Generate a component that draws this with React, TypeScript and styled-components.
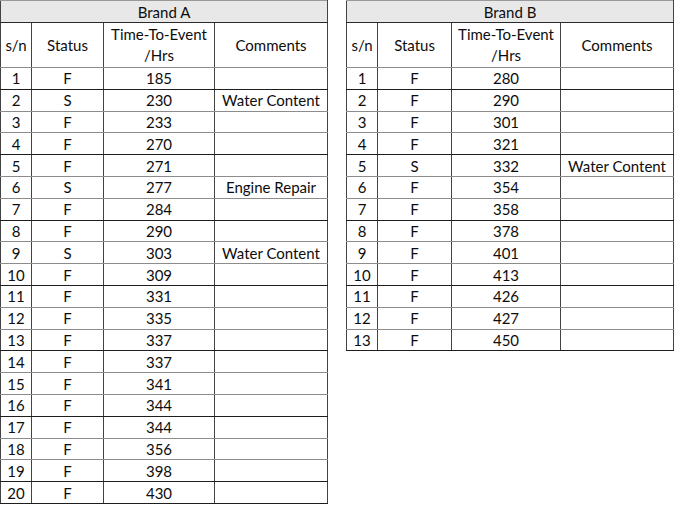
import styled, { createGlobalStyle } from "styled-components";

const GlobalStyle = createGlobalStyle`
  body {
    margin: 0;
    background: #ffffff;
    font-family: Lato, "Open Sans", sans-serif;
  }
`;

const Page = styled.div`
  display: flex;
  align-items: flex-start;
  gap: 18px;
`;

const Table = styled.table`
  border-collapse: collapse;
  table-layout: fixed;
  width: 327px;
  font-size: 15px;
  color: #0d0d0d;
`;

const BrandCell = styled.th`
  height: 21px;
  padding: 0;
  background: #e8e8e8;
  font-weight: normal;
  border: 1px solid #9a9a9a;
  border-left-color: #444;
  border-right-color: #444;
  border-bottom: 1px solid #2a2a2a;
`;

const HeadCell = styled.th`
  height: 44px;
  padding: 0;
  font-weight: normal;
  line-height: 21px;
  border-left: 1px solid #444;
  border-right: 1px solid #444;
  border-bottom: 1px solid #8c8c8c;
`;

const Cell = styled.td<{ $dark?: boolean }>`
  height: 20.8px;
  padding: 0;
  text-align: center;
  white-space: nowrap;
  border-left: 1px solid #444;
  border-right: 1px solid #444;
  border-bottom: 1px solid ${(p) => (p.$dark ? "#1e1e1e" : "#8c8c8c")};
`;

type Row = { status: string; hours: number; comment?: string };

const brandA: Row[] = [
  { status: "F", hours: 185 },
  { status: "S", hours: 230, comment: "Water Content" },
  { status: "F", hours: 233 },
  { status: "F", hours: 270 },
  { status: "F", hours: 271 },
  { status: "S", hours: 277, comment: "Engine Repair" },
  { status: "F", hours: 284 },
  { status: "F", hours: 290 },
  { status: "S", hours: 303, comment: "Water Content" },
  { status: "F", hours: 309 },
  { status: "F", hours: 331 },
  { status: "F", hours: 335 },
  { status: "F", hours: 337 },
  { status: "F", hours: 337 },
  { status: "F", hours: 341 },
  { status: "F", hours: 344 },
  { status: "F", hours: 344 },
  { status: "F", hours: 356 },
  { status: "F", hours: 398 },
  { status: "F", hours: 430 },
];

const brandB: Row[] = [
  { status: "F", hours: 280 },
  { status: "F", hours: 290 },
  { status: "F", hours: 301 },
  { status: "F", hours: 321 },
  { status: "S", hours: 332, comment: "Water Content" },
  { status: "F", hours: 354 },
  { status: "F", hours: 358 },
  { status: "F", hours: 378 },
  { status: "F", hours: 401 },
  { status: "F", hours: 413 },
  { status: "F", hours: 426 },
  { status: "F", hours: 427 },
  { status: "F", hours: 450 },
];

function BrandTable({ title, rows, cols }: { title: string; rows: Row[]; cols: number[] }) {
  return (
    <Table>
      <colgroup>
        {cols.map((w, i) => (
          <col key={i} style={{ width: w }} />
        ))}
      </colgroup>
      <thead>
        <tr>
          <BrandCell colSpan={4}>{title}</BrandCell>
        </tr>
        <tr>
          <HeadCell>s/n</HeadCell>
          <HeadCell>Status</HeadCell>
          <HeadCell>
            Time-To-Event
            <br />
            /Hrs
          </HeadCell>
          <HeadCell>Comments</HeadCell>
        </tr>
      </thead>
      <tbody>
        {rows.map((r, i) => {
          // every third line from the first row is drawn darker
          const dark = i % 3 === 0 || i === rows.length - 1;
          return (
            <tr key={i}>
              <Cell $dark={dark}>{i + 1}</Cell>
              <Cell $dark={dark}>{r.status}</Cell>
              <Cell $dark={dark}>{r.hours}</Cell>
              <Cell $dark={dark}>{r.comment}</Cell>
            </tr>
          );
        })}
      </tbody>
    </Table>
  );
}

export default function App() {
  return (
    <>
      <GlobalStyle />
      <Page>
        <BrandTable title="Brand A" rows={brandA} cols={[31, 72, 111, 113]} />
        <BrandTable title="Brand B" rows={brandB} cols={[31, 74, 109, 113]} />
      </Page>
    </>
  );
}
